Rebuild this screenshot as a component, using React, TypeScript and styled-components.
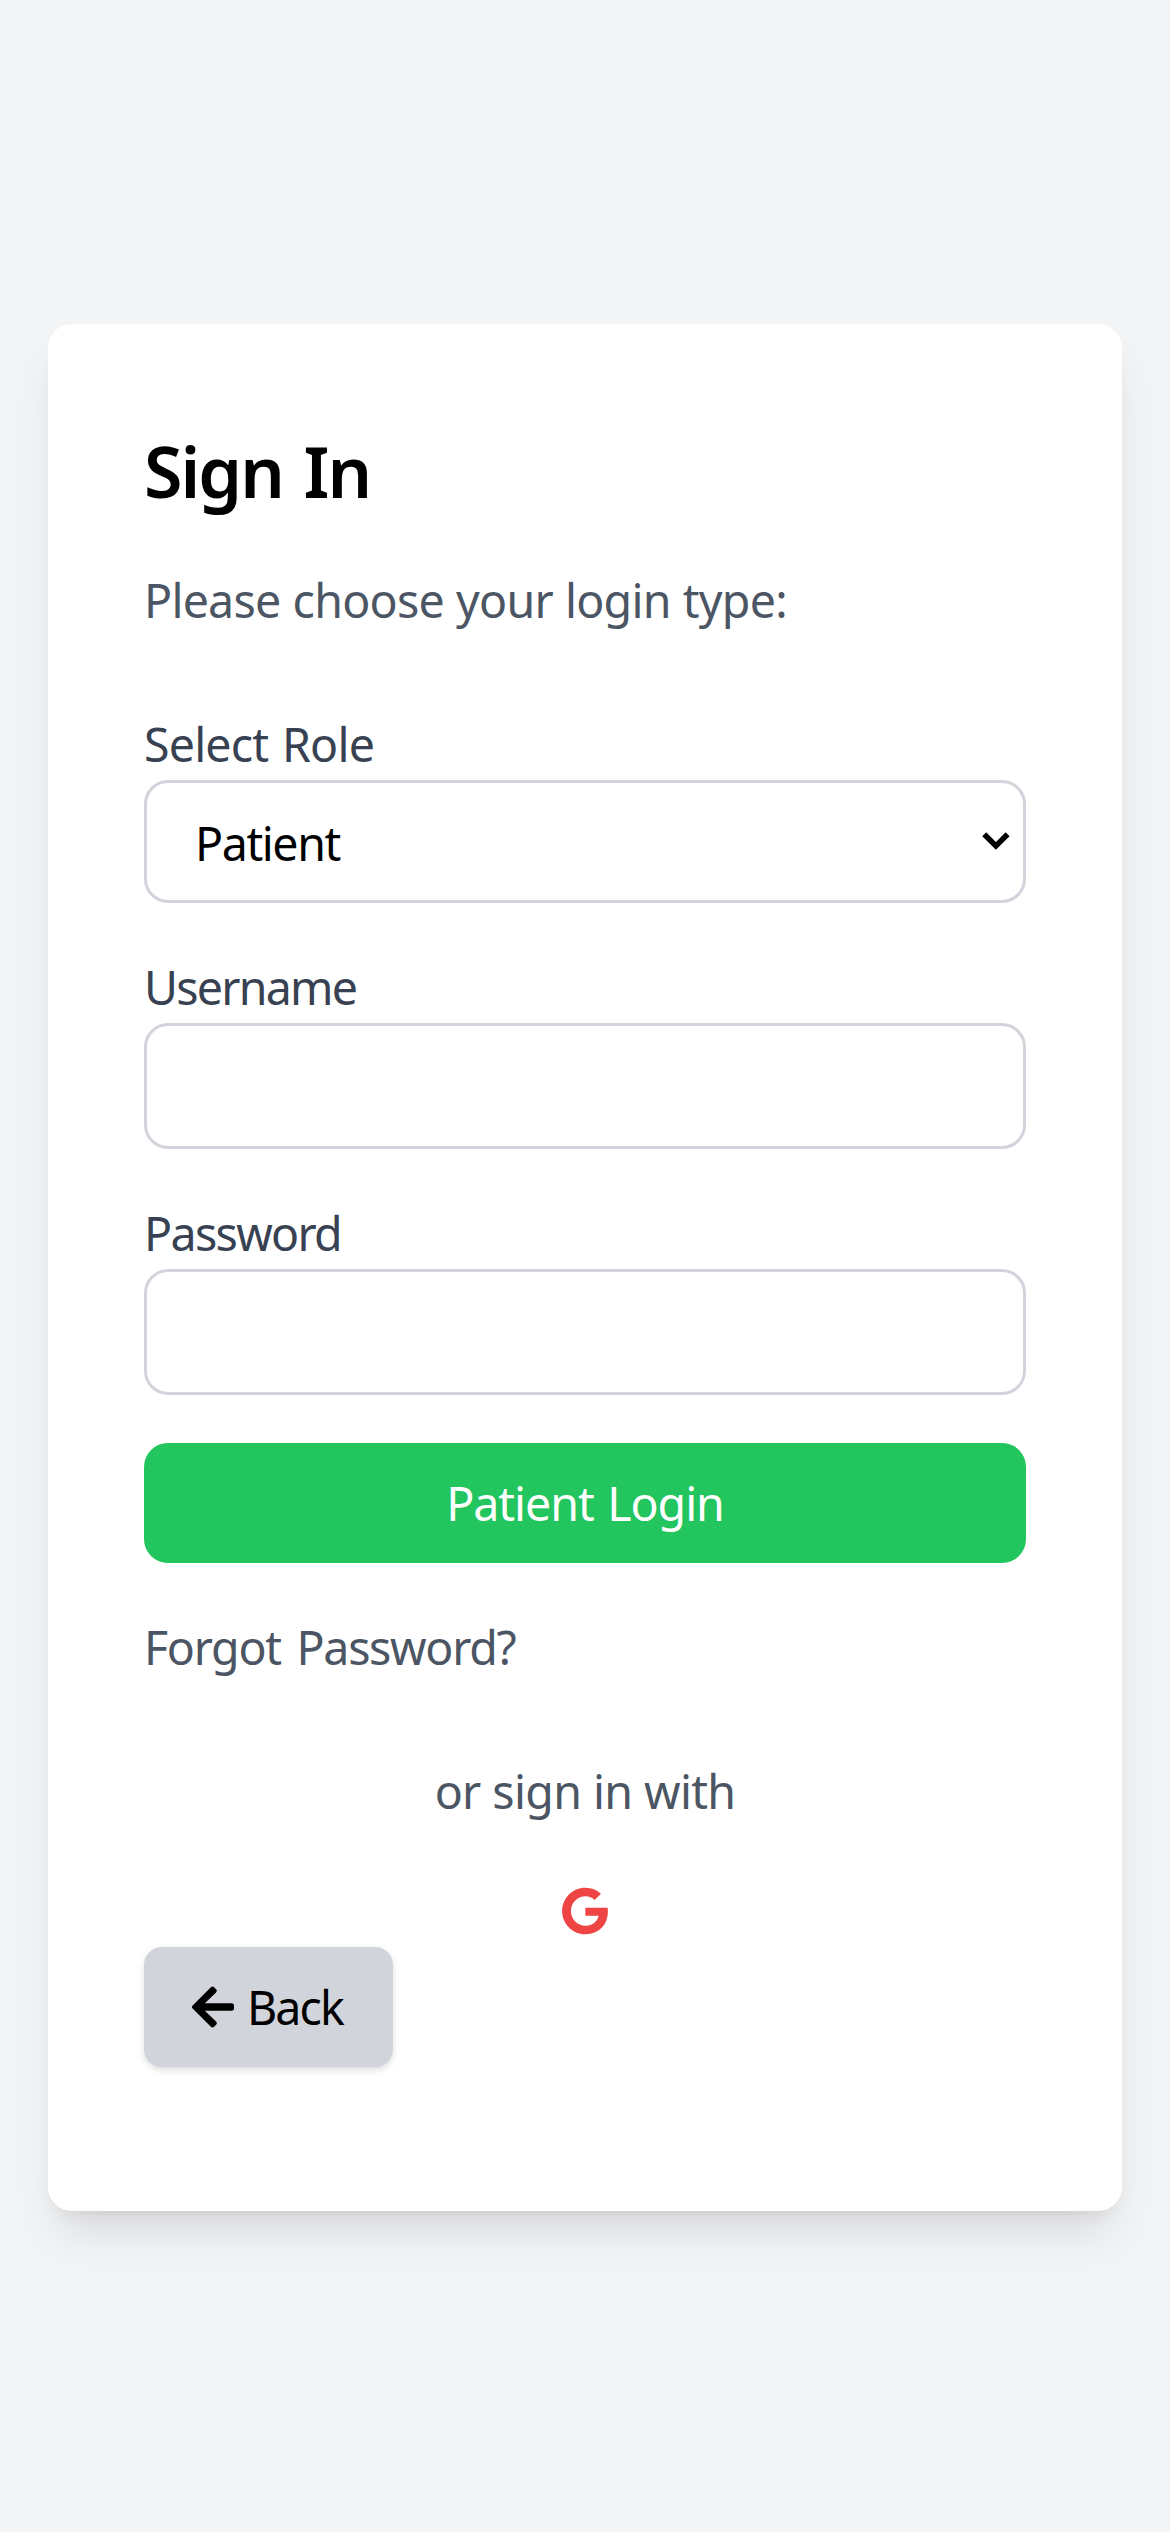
import React, { useState } from 'react';
import styled, { createGlobalStyle } from 'styled-components';
import { FaArrowLeft, FaGoogle } from 'react-icons/fa';

const GlobalStyle = createGlobalStyle`
  *, *::before, *::after { box-sizing: border-box; }
  body {
    margin: 0;
    background: #f3f4f6;
    color: #000;
    font-family: "Noto Sans", "Open Sans", sans-serif;
    font-size: 46.5px;
    line-height: 72px;
  }
`;

interface Spacing {
  $track?: number;
  $word?: number;
}

const Text = styled.span<Spacing>`
  letter-spacing: ${({ $track = 0 }) => $track}px;
  word-spacing: ${({ $word = 0 }) => $word}px;
  white-space: nowrap;
`;

const Page = styled.main`
  display: flex;
  flex-direction: column;
  min-height: 2532px;
  padding: 324px 48px 0;
`;

const Card = styled.section`
  display: flex;
  flex-direction: column;
  height: 1887px;
  padding: 96px;
  background: #fff;
  border-radius: 24px;
  box-shadow: 0 30px 45px -9px rgba(0, 0, 0, 0.1), 0 12px 18px -12px rgba(0, 0, 0, 0.1);
`;

const Title = styled.h2`
  height: 96px;
  margin: 0 0 48px;
  font-size: 70px;
  font-weight: 600;
  line-height: 102px;
`;

const Intro = styled.p`
  margin: 0 0 72px;
  color: #4b5563;
`;

const Form = styled.form`
  display: flex;
  flex-direction: column;
  gap: 48px;
`;

const Field = styled.label`
  display: flex;
  flex-direction: column;
  color: #374151;
`;

const SelectBox = styled.div`
  display: grid;
  align-items: center;
  height: 123px;

  > * {
    grid-area: 1 / 1;
  }
`;

const Select = styled.select`
  width: 100%;
  height: 123px;
  padding: 2px 48px 0 48px;
  appearance: none;
  background: #fff;
  border: 3px solid #d1d5db;
  border-radius: 24px;
  color: #000;
  font: inherit;
  letter-spacing: -1.42px;
`;

const Chevron = styled.svg`
  justify-self: end;
  width: 28px;
  height: 18px;
  margin: 0 16px 1px 0;
  pointer-events: none;
`;

const Input = styled.input`
  width: 100%;
  height: 126px;
  padding: 24px 48px;
  background: #fff;
  border: 3px solid #d1d5db;
  border-radius: 24px;
  font: inherit;
`;

const LoginButton = styled.button`
  height: 120px;
  padding: 24px 48px;
  background: #22c55e;
  border: 0;
  border-radius: 24px;
  color: #fff;
  font: inherit;
`;

const ForgotLink = styled.a`
  align-self: flex-start;
  color: #4b5563;
  text-decoration: none;
`;

const Divider = styled.p`
  margin: 72px 0 48px;
  color: #4b5563;
  text-align: center;
`;

const SocialRow = styled.div`
  display: flex;
  align-items: center;
  justify-content: center;
  height: 72px;
  color: #ef4444;
  font-size: 48px;
`;

const BackButton = styled.button`
  display: flex;
  align-items: center;
  align-self: flex-start;
  gap: 13px;
  width: 249px;
  height: 120px;
  padding: 24px 0 24px 48px;
  background: #d1d5db;
  border: 0;
  border-radius: 18px;
  box-shadow: 0 3px 9px rgba(0, 0, 0, 0.1), 0 3px 6px -3px rgba(0, 0, 0, 0.1);
  color: #000;
  font: inherit;

  svg {
    flex: none;
    width: 42px;
    height: 48px;
  }
`;

const roles = ['Patient', 'Doctor', 'Admin'];

export default function App() {
  const [role, setRole] = useState('Patient');

  return (
    <>
      <GlobalStyle />
      <Page>
        <Card>
          <Title><Text $track={-2} $word={4.5}>Sign In</Text></Title>
          <Intro><Text $track={-0.75} $word={0.8}>Please choose your login type:</Text></Intro>
          <Form onSubmit={(e) => e.preventDefault()}>
            <Field>
              <Text $track={-0.8} $word={2.4}>Select Role</Text>
              <SelectBox>
                <Select value={role} onChange={(e) => setRole(e.target.value)}>
                  {roles.map((name) => <option key={name}>{name}</option>)}
                </Select>
                <Chevron viewBox="0 0 28 18" fill="none" stroke="#000" strokeWidth="5.6">
                  <path d="M2.2 2.2 13.9 13.9 25.6 2.2" />
                </Chevron>
              </SelectBox>
            </Field>
            <Field>
              <Text $track={-1.76}>Username</Text>
              <Input type="text" />
            </Field>
            <Field>
              <Text $track={-1.66}>Password</Text>
              <Input type="password" />
            </Field>
            <LoginButton type="submit"><Text $track={-1.05} $word={2.5}>{role} Login</Text></LoginButton>
            <ForgotLink href="#"><Text $track={-1.3} $word={5}>Forgot Password?</Text></ForgotLink>
          </Form>
          <Divider><Text $track={-0.7} $word={0.4}>or sign in with</Text></Divider>
          <SocialRow><FaGoogle /></SocialRow>
          <BackButton type="button">
            <FaArrowLeft />
            <Text $track={-1.9}>Back</Text>
          </BackButton>
        </Card>
      </Page>
    </>
  );
}
